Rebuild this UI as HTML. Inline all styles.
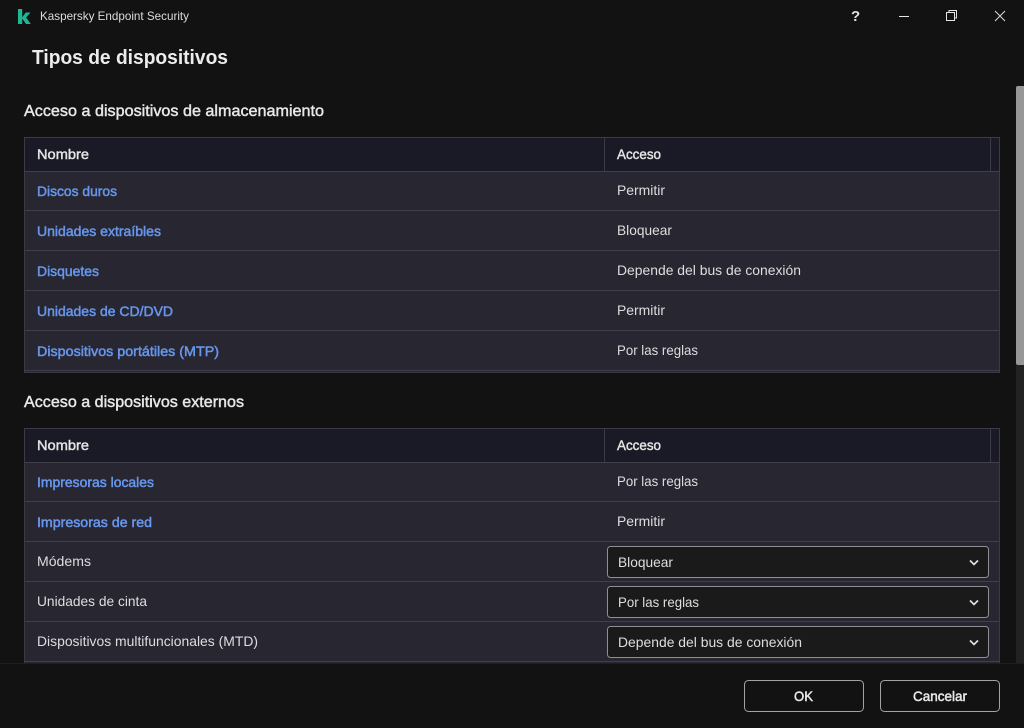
<!DOCTYPE html>
<html lang="es"><head><meta charset="utf-8"><title>Tipos de dispositivos</title>
<style>
html,body{margin:0;padding:0;background:#121212;width:1024px;height:728px;overflow:hidden}
svg{display:block}
text{font-family:"Liberation Sans",sans-serif;fill:#e6e6e6;font-size:14px}
.h{fill:#e4e4e4;stroke:#e4e4e4;stroke-width:.45px;font-size:14px}
.l{fill:#6796ec;stroke:#6796ec;stroke-width:.5px;font-size:14px}
.t{fill:#dedede;font-size:14px}
.s{fill:#e8e8e8;stroke:#e8e8e8;stroke-width:.45px;font-size:16px}
.b{fill:#e8e8e8;stroke:#e8e8e8;stroke-width:.5px;font-size:14px}
</style></head><body>
<svg width="1024" height="728" viewBox="0 0 1024 728" xmlns="http://www.w3.org/2000/svg">
<rect width="1024" height="728" fill="#121212"/>
<!-- logo -->
<path d="M18 9h4.200v15h-4.200zM22.200 17.200l3.600-4.700h4.700l-4.400 5 4.700 6.500h-4.800l-3.800-5.500z" fill="#1fb694"/>
<text x="40" y="20" style="font-size:12px;fill:#dcdcdc" textLength="149" lengthAdjust="spacingAndGlyphs">Kaspersky Endpoint Security</text>
<!-- window controls -->
<text x="851" y="21" style="font-size:15px;font-weight:bold;fill:#e0e0e0">?</text>
<rect x="899" y="16" width="10" height="1" fill="#e6e6e6"/>
<path d="M946.500 12.500h8v8h-8z" fill="#121212" stroke="#e6e6e6"/>
<path d="M949 12.500v-2h7.500v7.500h-2" fill="none" stroke="#e6e6e6"/>
<path d="M995 11l10 10M1005 11l-10 10" stroke="#d8d8d8" stroke-width="1" fill="none"/>
<!-- headings -->
<text x="32" y="64" style="font-size:20px;font-weight:bold;fill:#ececec" textLength="196" lengthAdjust="spacingAndGlyphs">Tipos de dispositivos</text>
<text x="24" y="116" class="s" textLength="300" lengthAdjust="spacingAndGlyphs">Acceso a dispositivos de almacenamiento</text>
<text x="24" y="407" class="s" textLength="220" lengthAdjust="spacingAndGlyphs">Acceso a dispositivos externos</text>
<!-- scrollbar -->
<rect x="1016" y="86" width="8" height="578" fill="#222222"/>
<path d="M1016 88q0-2 2-2h6v279h-6q-2 0-2-2z" fill="#979797"/>
<!-- table 1 -->
<rect x="24.500" y="137.500" width="975" height="235" fill="#272631" stroke="#3c3b44"/>
<rect x="25" y="138" width="974" height="33" fill="#191a25"/>
<path d="M25 171.500h974M25 210.500h974M25 250.500h974M25 290.500h974M25 330.500h974M25 370.500h974" stroke="#41404a"/>
<path d="M604.500 138v33M990.500 138v33" stroke="#3c3b44"/>
<text x="37" y="159" class="h" textLength="52" lengthAdjust="spacingAndGlyphs">Nombre</text>
<text x="617" y="159" class="h" textLength="44" lengthAdjust="spacingAndGlyphs">Acceso</text>
<text x="37" y="196" class="l" textLength="80" lengthAdjust="spacingAndGlyphs">Discos duros</text>
<text x="37" y="236" class="l" textLength="124" lengthAdjust="spacingAndGlyphs">Unidades extraíbles</text>
<text x="37" y="276" class="l" textLength="62" lengthAdjust="spacingAndGlyphs">Disquetes</text>
<text x="37" y="316" class="l" textLength="136" lengthAdjust="spacingAndGlyphs">Unidades de CD/DVD</text>
<text x="37" y="356" class="l" textLength="182" lengthAdjust="spacingAndGlyphs">Dispositivos portátiles (MTP)</text>
<text x="617" y="195" class="t" textLength="48" lengthAdjust="spacingAndGlyphs">Permitir</text>
<text x="617" y="235" class="t" textLength="55" lengthAdjust="spacingAndGlyphs">Bloquear</text>
<text x="617" y="275" class="t" textLength="184" lengthAdjust="spacingAndGlyphs">Depende del bus de conexión</text>
<text x="617" y="315" class="t" textLength="48" lengthAdjust="spacingAndGlyphs">Permitir</text>
<text x="617" y="355" class="t" textLength="81" lengthAdjust="spacingAndGlyphs">Por las reglas</text>
<!-- table 2 -->
<rect x="24.500" y="428.500" width="975" height="240" fill="#272631" stroke="#3c3b44"/>
<rect x="25" y="429" width="974" height="33" fill="#191a25"/>
<path d="M25 462.500h974M25 501.500h974M25 541.500h974M25 581.500h974M25 621.500h974M25 661.500h974" stroke="#41404a"/>
<path d="M604.500 429v33M990.500 429v33" stroke="#3c3b44"/>
<text x="37" y="450" class="h" textLength="52" lengthAdjust="spacingAndGlyphs">Nombre</text>
<text x="617" y="450" class="h" textLength="44" lengthAdjust="spacingAndGlyphs">Acceso</text>
<text x="37" y="487" class="l" textLength="117" lengthAdjust="spacingAndGlyphs">Impresoras locales</text>
<text x="37" y="527" class="l" textLength="115" lengthAdjust="spacingAndGlyphs">Impresoras de red</text>
<text x="37" y="566" class="t" textLength="54" lengthAdjust="spacingAndGlyphs">Módems</text>
<text x="37" y="606" class="t" textLength="110" lengthAdjust="spacingAndGlyphs">Unidades de cinta</text>
<text x="37" y="646" class="t" textLength="221" lengthAdjust="spacingAndGlyphs">Dispositivos multifuncionales (MTD)</text>
<text x="617" y="486" class="t" textLength="81" lengthAdjust="spacingAndGlyphs">Por las reglas</text>
<text x="617" y="526" class="t" textLength="48" lengthAdjust="spacingAndGlyphs">Permitir</text>
<!-- selects -->
<g fill="#1a1a1a" stroke="#8f8f94">
<rect x="607.500" y="546.500" width="381" height="31" rx="3"/>
<rect x="607.500" y="586.500" width="381" height="31" rx="3"/>
<rect x="607.500" y="626.500" width="381" height="31" rx="3"/>
</g>
<text x="618" y="567" class="t" textLength="55" lengthAdjust="spacingAndGlyphs">Bloquear</text>
<text x="618" y="607" class="t" textLength="81" lengthAdjust="spacingAndGlyphs">Por las reglas</text>
<text x="618" y="647" class="t" textLength="184" lengthAdjust="spacingAndGlyphs">Depende del bus de conexión</text>
<g fill="none" stroke="#e6e6e6" stroke-width="1.600">
<path d="M970 560.500l4 4 4-4"/>
<path d="M970 600.500l4 4 4-4"/>
<path d="M970 640.500l4 4 4-4"/>
</g>
<!-- footer -->
<rect x="0" y="664" width="1024" height="64" fill="#121212"/>
<rect x="0" y="663" width="1024" height="1" fill="#1e1e1e"/>
<rect x="744.500" y="680.500" width="119" height="31" rx="4" fill="#121212" stroke="#a3a3a3"/>
<rect x="880.500" y="680.500" width="119" height="31" rx="4" fill="#121212" stroke="#a3a3a3"/>
<text x="794" y="701" class="b" textLength="19" lengthAdjust="spacingAndGlyphs">OK</text>
<text x="913" y="701" class="b" textLength="54" lengthAdjust="spacingAndGlyphs">Cancelar</text>
</svg>
</body></html>
